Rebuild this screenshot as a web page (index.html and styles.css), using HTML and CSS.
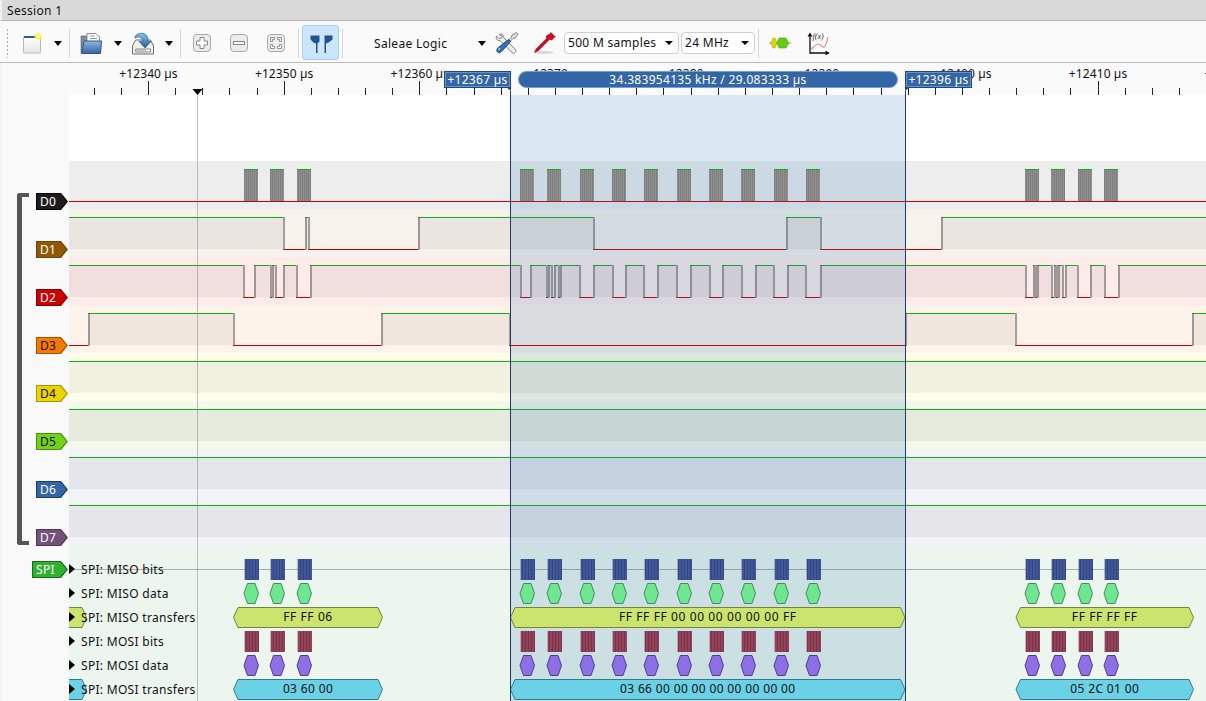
FILE: index.html
```html
<!DOCTYPE html>
<html lang="en">
<head>
    <meta charset="UTF-8">
    <title>Saleae Logic</title>
    <link rel="stylesheet" href="styles.css">
</head>
<body>

    <div class="titlebar">Session 1</div>

    <!-- Toolbar -->
    <div class="toolbar">
        <div class="grip"></div>

        <svg class="icon new-icon" viewBox="0 0 24 24">
            <defs>
                <linearGradient id="pageGrad" x1="0" y1="0" x2="0" y2="1">
                    <stop offset="0" stop-color="#ffffff"/>
                    <stop offset="1" stop-color="#e6e6e6"/>
                </linearGradient>
                <radialGradient id="glowGrad">
                    <stop offset="0" stop-color="#fffbd0"/>
                    <stop offset=".5" stop-color="#fff04a"/>
                    <stop offset="1" stop-color="#fff04a" stop-opacity="0"/>
                </radialGradient>
            </defs>
            <rect x="1.5" y="5.5" width="17" height="16.5" rx="1" fill="url(#pageGrad)" stroke="#b8b8b8"/>
            <rect x="2" y="5" width="14" height="2" fill="#2a5ba5"/>
            <circle cx="16" cy="5.5" r="4.5" fill="url(#glowGrad)"/>
        </svg>
        <span class="arrow arrow-new"></span>
        <span class="sep sep-1"></span>

        <svg class="icon open-icon" viewBox="0 0 24 24">
            <defs>
                <linearGradient id="folderGrad" x1="0" y1="0" x2="0" y2="1">
                    <stop offset="0" stop-color="#8fb6e4"/>
                    <stop offset="1" stop-color="#34649f"/>
                </linearGradient>
            </defs>
            <path d="M2 5h7l1 2h3v15H2z" fill="#7d8a99" stroke="#55606e" stroke-width=".6"/>
            <path d="M8 2.500h9l3.500 3.500V14H8z" fill="#fff" stroke="#8a8a8a"/>
            <path d="M11 5h5M11 7.500h7" stroke="#9a9a9a"/>
            <path d="M5 10h17.500l-1 12.500H2.500z" fill="url(#folderGrad)" stroke="#2f5684"/>
        </svg>
        <span class="arrow arrow-open"></span>

        <svg class="icon save-icon" viewBox="0 0 24 24">
            <defs>
                <linearGradient id="arrowGrad" x1="0" y1="0" x2="0" y2="1">
                    <stop offset="0" stop-color="#8cc0ec"/>
                    <stop offset="1" stop-color="#1f5f9c"/>
                </linearGradient>
            </defs>
            <path d="M1.500 15l3-6h15l3 6v8h-21z" fill="#f1f1f1" stroke="#6d6d6d"/>
            <path d="M4.500 18h15v3h-15z" fill="#fff" stroke="#6d6d6d" stroke-width=".8"/>
            <path d="M4.500 18h11v3h-11z" fill="#bdbdbd"/>
            <path d="M4 5.500c2-3.500 9-4.500 11.500-1 1.500 2 1.500 4 1.500 6h3l-6 6.500-6-6.500h3.500c0-2-.5-4-3-4.500-1.800-.3-3 0-4.500 1z" fill="url(#arrowGrad)" stroke="#265a8c" stroke-width=".7"/>
        </svg>
        <span class="arrow arrow-save"></span>
        <span class="sep sep-2"></span>

        <svg class="zoom-btn zoom-in" viewBox="0 0 18 18">
            <rect x=".5" y=".5" width="17" height="17" rx="3.5" fill="#ececec" stroke="#a8a8a8"/>
            <path d="M7 3.500h4V7h3.500v4H11v3.500H7V11H3.500V7H7z" fill="#fff" stroke="#888"/>
        </svg>
        <svg class="zoom-btn zoom-out" viewBox="0 0 18 18">
            <rect x=".5" y=".5" width="17" height="17" rx="3.5" fill="#ececec" stroke="#a8a8a8"/>
            <rect x="3.500" y="7.500" width="11" height="3" fill="#fff" stroke="#888"/>
        </svg>
        <svg class="zoom-btn zoom-fit" viewBox="0 0 18 18">
            <rect x=".5" y=".5" width="17" height="17" rx="3.5" fill="#ececec" stroke="#a8a8a8"/>
            <path d="M3.500 7.500v-4H7.500v2H5.500v2zM14.500 7.500v-4h-4v2h2v2zM3.500 10.500v4H7.500v-2H5.500v-2zM14.500 10.500v4h-4v-2h2v-2z" fill="#fff" stroke="#888" stroke-width=".9"/>
        </svg>
        <span class="sep sep-3"></span>

        <div class="toggle">
            <svg class="pins" viewBox="308.500 32.500 24 20">
                <path d="M310 35h9v6l-2 2v10h-1.500V43L313 42l-3-3z" fill="#1d5590"/>
                <path d="M332 35h-8v18h1.500V43l2.500-1 4-3z" fill="#1d5590"/>
            </svg>
        </div>
        <span class="sep sep-4"></span>

        <span class="device">Saleae Logic</span>
        <span class="arrow"></span>

        <svg class="icon tools-icon" viewBox="0 0 24 24">
            <path d="M4 3.500c2.500-1.500 5 .5 4.500 3l12 12c1 1 .5 2.500-1 3.500-1 .5-2 .5-2.500-.5l-12-12c-3 .5-4.500-2-3.500-4.500l2.500 2.500 2.500-.5.500-2z" fill="#ececec" stroke="#7f7f7f"/>
            <path d="M21.500 1.500l1.500 1.500-3 4-2 .5-2.500 2.500-1.500-1.500 2.500-2.500.5-2z" fill="#e0e0e0" stroke="#666" stroke-width=".8"/>
            <path d="M13.500 8.500l2 2-8 9c-1.500 2-3.500 3-5 1.500s-.5-3.500 1.500-5z" fill="#2f72b8" stroke="#1a4474"/>
            <path d="M5 17l-1.500 2" stroke="#bcd8f2" stroke-width="1.200"/>
        </svg>
        <svg class="icon probe-icon" viewBox="0 0 24 24">
            <ellipse cx="12" cy="21.500" rx="10" ry="1.500" fill="#d8d8d8"/>
            <path d="M19 1.500l4.500 4.500-1.500.5-2 2.500-2.500-.5L6 20l-3.500 1.500L4 18l10.500-10.500-.5-2.500 3-1.500z" fill="#cc0d1d" stroke="#9c0a16" stroke-width=".5"/>
        </svg>

        <div class="combo combo-samples">500 M samples<span class="arrow arrow-small"></span></div>
        <div class="combo combo-rate">24 MHz<span class="arrow arrow-small"></span></div>
        <span class="sep sep-5"></span>

        <svg class="icon proto-icon" viewBox="0 0 24 24">
            <path d="M1 12h22" stroke="#8a8a8a"/>
            <path d="M5 7h2l2 5-2 5H5l-2-5z" fill="#e0d800" stroke="#a5a500" stroke-width=".6"/>
            <path d="M11 7h7l2.500 5-2.500 5h-7l-2-5z" fill="#66cc11" stroke="#4fa10a" stroke-width=".6"/>
        </svg>
        <svg class="icon fx-icon" viewBox="0 0 24 24">
            <path d="M4 5v17h19" fill="none" stroke="#111" stroke-width="1.300"/>
            <path d="M4 1.500l-2.500 4h5zM23.500 22l-4-2.500v5z" fill="#111"/>
            <path d="M5 18c3-1 4-5 7-5s4 4 6 3 3-5 4-10" fill="none" stroke="#e58a8a" stroke-width="1.200"/>
            <text class="fx-text" x="6.500" y="7.500">f(x)</text>
        </svg>
    </div>

    <div class="main">
        <!-- Channel labels -->
        <div class="gutter">
            <div class="bracket"></div>
            <div class="tags">
                <div class="tag tag-d0"><span>D0</span></div>
                <div class="tag tag-d1"><span>D1</span></div>
                <div class="tag tag-d2"><span>D2</span></div>
                <div class="tag tag-d3"><span>D3</span></div>
                <div class="tag tag-d4"><span>D4</span></div>
                <div class="tag tag-d5"><span>D5</span></div>
                <div class="tag tag-d6"><span>D6</span></div>
                <div class="tag tag-d7"><span>D7</span></div>
                <div class="tag tag-spi"><span>SPI</span></div>
            </div>
        </div>

        <!-- Waveforms, drawn by script.js -->
        <div class="plot">
            <svg id="waves" width="1137" height="638" viewBox="69 63 1137 638">
                <defs>
                    <pattern id="burstGray" width="2" height="10" patternUnits="userSpaceOnUse">
                        <rect width="2" height="10" fill="#8f8f8f"/>
                        <rect width="1" height="10" fill="#7f7f7f"/>
                    </pattern>
                    <pattern id="bitsBlue" width="3" height="10" patternUnits="userSpaceOnUse">
                        <rect width="3" height="10" fill="#3f5699"/>
                        <rect width="1" height="10" fill="#334682"/>
                    </pattern>
                    <pattern id="bitsRed" width="3" height="10" patternUnits="userSpaceOnUse">
                        <rect width="3" height="10" fill="#92425a"/>
                        <rect width="1" height="10" fill="#7b3349"/>
                    </pattern>
                </defs>
            </svg>

            <div class="flag flag-left">+12367 µs</div>
            <div class="measure">34.383954135 kHz / 29.083333 µs</div>
            <div class="flag flag-right">+12396 µs</div>

            <div class="rows">
                <div class="row"><span class="caret"></span>SPI: MISO bits</div>
                <div class="row"><span class="caret"></span>SPI: MISO data</div>
                <div class="row"><span class="caret"></span>SPI: MISO transfers</div>
                <div class="row"><span class="caret"></span>SPI: MOSI bits</div>
                <div class="row"><span class="caret"></span>SPI: MOSI data</div>
                <div class="row"><span class="caret"></span>SPI: MOSI transfers</div>
            </div>
        </div>
    </div>

    <script src="script.js"></script>
</body>
</html>
```

FILE: styles.css
```css
body {
    font-family: "Noto Sans", Tahoma, sans-serif;
    font-size: 12px;
    letter-spacing: .3px;
    margin: 0;
    width: 1206px;
    height: 701px;
    overflow: hidden;
    background-color: #fafafa;
    color: #111;
}

/* title bar */
.titlebar {
    height: 20px;
    line-height: 21px;
    padding-left: 5px;
    background-color: #d9d9d9;
    border-bottom: 1px solid #b4b4b4;
    border-left: 2px solid #f0f0f0;
}

/* toolbar */
.toolbar {
    display: flex;
    align-items: center;
    box-sizing: border-box;
    height: 42px;
    padding: 8px 0 5px 6px;
    background-color: #fafafa;
    border-bottom: 1px solid #bbb;
}
.grip {
    width: 3px;
    height: 30px;
    background-image: radial-gradient(circle, #aaa 1px, transparent 1px);
    background-size: 3px 4px;
}
.icon {
    width: 24px;
    height: 24px;
    flex: none;
}
.arrow {
    flex: none;
    width: 0;
    height: 0;
    border-left: 4.5px solid transparent;
    border-right: 4.5px solid transparent;
    border-top: 5px solid #000;
}
.arrow-small {
    border-left-width: 4px;
    border-right-width: 4px;
    border-top-width: 4px;
}
.sep {
    flex: none;
    width: 1px;
    height: 29px;
    background-color: #d6d6d6;
}
.new-icon { margin-left: 13px; }
.arrow-new { margin-left: 8px; }
.sep-1 { margin-left: 7px; }
.open-icon { margin-left: 9px; }
.arrow-open { margin-left: 11px; }
.save-icon { margin-left: 9px; }
.arrow-save { margin-left: 10px; }
.sep-2 { margin-left: 7px; }
.zoom-btn {
    flex: none;
    width: 18px;
    height: 18px;
}
.zoom-in { margin-left: 12px; }
.zoom-out { margin-left: 19px; }
.zoom-fit { margin-left: 19px; }
.sep-3 { margin-left: 13px; }
.toggle {
    flex: none;
    display: flex;
    align-items: center;
    justify-content: center;
    box-sizing: border-box;
    width: 37px;
    height: 35px;
    margin-left: 3px;
    margin-top: -1px;
    background-color: #cde5fb;
    border: 1px solid #a6d0f6;
    border-radius: 3px;
}
.pins {
    width: 24px;
    height: 20px;
}
.sep-4 { margin-left: 3px; }
.device {
    flex: none;
    width: 104px;
    margin-left: 31px;
}
.tools-icon { margin-left: 9px; }
.probe-icon { margin-left: 13px; }
.combo {
    flex: none;
    display: flex;
    align-items: center;
    justify-content: space-between;
    box-sizing: border-box;
    height: 22px;
    margin-top: -1px;
    padding: 0 5px 0 3px;
    background-color: #fff;
    border: 1px solid #cfcfcf;
    border-radius: 4px;
}
.combo-samples {
    width: 115px;
    margin-left: 8px;
}
.combo-rate {
    width: 74px;
    margin-left: 2px;
}
.sep-5 { margin-left: 3px; }
.proto-icon { margin-left: 9px; }
.fx-icon { margin-left: 14px; }
.fx-text {
    font-family: "Liberation Serif", serif;
    font-style: italic;
    font-size: 8px;
    letter-spacing: 0;
    fill: #222;
}

/* main area */
.main {
    display: flex;
    height: 638px;
}
.gutter {
    flex: none;
    display: flex;
    box-sizing: border-box;
    width: 69px;
    padding-top: 130px;
    background-color: #f9f9f9;
    border-left: 2px solid #f3f3f3;
}
.bracket {
    flex: none;
    box-sizing: border-box;
    width: 12px;
    height: 352px;
    margin-left: 15px;
    border: 4px solid #555;
    border-left-width: 5px;
    border-right: none;
    border-radius: 3px 0 0 3px;
}
.tags {
    flex: 1;
    display: flex;
    flex-direction: column;
    align-items: flex-end;
    gap: 31px;
    padding-right: 1px;
}
.tag {
    position: relative;
    flex: none;
    display: flex;
    align-items: center;
    box-sizing: border-box;
    width: 32px;
    height: 17px;
    padding-left: 4px;
    background-color: var(--edge);
    color: var(--ink);
    clip-path: polygon(0 0, 25px 0, 100% 50%, 25px 100%, 0 100%);
}
.tag::before {
    content: "";
    position: absolute;
    top: 1px;
    right: 1.5px;
    bottom: 1px;
    left: 1px;
    background-color: var(--fill);
    clip-path: polygon(0 0, 23px 0, 100% 50%, 23px 100%, 0 100%);
}
.tag span {
    position: relative;
}
.tag-d0 { --edge: #000; --fill: #1c1c1c; --ink: #fff; }
.tag-d1 { --edge: #6e4502; --fill: #8f5902; --ink: #fff; }
.tag-d2 { --edge: #8a0000; --fill: #cc0000; --ink: #fff; }
.tag-d3 { --edge: #a85200; --fill: #f57900; --ink: #111; }
.tag-d4 { --edge: #a89700; --fill: #edd400; --ink: #111; }
.tag-d5 { --edge: #4e8f0f; --fill: #73d216; --ink: #111; }
.tag-d6 { --edge: #1f3f6b; --fill: #3465a4; --ink: #fff; }
.tag-d7 { --edge: #523756; --fill: #75507b; --ink: #fff; }
.tag-spi {
    --edge: #167016;
    --fill: #2fb32f;
    --ink: #fff;
    width: 36px;
    margin-top: -16px;
    clip-path: polygon(0 0, 29px 0, 100% 50%, 29px 100%, 0 100%);
}
.tag-spi::before {
    clip-path: polygon(0 0, 27px 0, 100% 50%, 27px 100%, 0 100%);
}

.plot {
    position: relative;
    flex: 1;
    overflow: hidden;
}
#waves {
    display: block;
}
#waves text {
    font-family: "Noto Sans", Tahoma, sans-serif;
    font-size: 12px;
    fill: #111;
}
#waves text.ruler-text {
    letter-spacing: .1px;
}
#waves text.miso-text {
    letter-spacing: .6px;
}
#waves text.mosi-text {
    letter-spacing: .35px;
}

/* cursors and measurement over the ruler */
.flag, .measure {
    position: absolute;
    top: 8px;
    box-sizing: border-box;
    height: 17px;
    line-height: 15px;
    text-align: center;
    color: #fff;
    background-color: #3465a4;
    border: 1px solid #6f9fe0;
}
.flag {
    width: 67px;
    outline: 1px solid #24467a;
    outline-offset: -1px;
    box-shadow: inset 0 0 0 1px #5f93dc;
}
.flag::after {
    content: "";
    position: absolute;
    top: 15px;
    width: 5px;
    height: 4px;
    background-color: #24467a;
}
.flag-left { left: 375px; }
.flag-left::after {
    right: -1px;
    clip-path: polygon(0 0, 100% 0, 100% 100%);
}
.flag-right { left: 836px; }
.flag-right::after {
    left: -1px;
    clip-path: polygon(0 0, 100% 0, 0 100%);
}
.measure {
    left: 449px;
    width: 380px;
    border-radius: 9px;
}

/* protocol rows */
.rows {
    position: absolute;
    top: 494px;
    left: 0;
}
.row {
    display: flex;
    align-items: center;
    height: 24px;
}
.caret {
    flex: none;
    width: 0;
    height: 0;
    margin-right: 6px;
    border-top: 5.5px solid transparent;
    border-bottom: 5.5px solid transparent;
    border-left: 6px solid #000;
}
```

FILE: script.js
```js
// Draws the ruler, the channels and the protocol rows into #waves
const svg = document.getElementById('waves');
const NS = 'http://www.w3.org/2000/svg';

function add(tag, attrs, text) {
    const el = document.createElementNS(NS, tag);
    for (const k in attrs) el.setAttribute(k, attrs[k]);
    if (text) el.textContent = text;
    svg.appendChild(el);
    return el;
}
function rect(x, y, w, h, fill) {
    return add('rect', { x: x, y: y, width: w, height: h, fill: fill, 'shape-rendering': 'crispEdges' });
}

const LEFT = 69, RIGHT = 1206;
const GREEN = '#0fb30f', RED = '#c80000';

// start of each 14px burst of clock edges
const bursts = [244, 270, 297, 520, 547, 580, 612, 644, 677, 709, 741, 774, 806, 1025, 1051, 1078, 1104];

const channels = [
    { bg: '#ededed', high: false, edges: [] },
    { bg: '#f7f2ec', high: true, edges: [283, 305, 308, 418, 593, 786, 820, 941] },
    { bg: '#fdebea', high: true, edges: [243, 254, 270, 272, 275, 283, 296, 310, 520, 530, 546, 548, 551, 554, 558, 560, 579, 593, 612, 625, 643, 657, 676, 690, 709, 722, 741, 755, 773, 787, 805, 820, 1025, 1033, 1035, 1037, 1051, 1054, 1056, 1058, 1062, 1065, 1077, 1090, 1104, 1118] },
    { bg: '#fef3ea', high: false, edges: [88, 233, 381, 509, 905, 1015, 1192] },
    { bg: '#fffeeb', high: true, edges: [] },
    { bg: '#f3f8ea', high: true, edges: [] },
    { bg: '#f1f3f8', high: true, edges: [] },
    { bg: '#f3f2f6', high: true, edges: [] }
];

// ruler
rect(LEFT, 63, RIGHT - LEFT, 32, '#fafafa');
rect(LEFT, 95, RIGHT - LEFT, 66, '#ffffff');
const TICK = 27.13;
for (let i = -2; i < 42; i++) {
    const x = Math.round(148 + i * TICK);
    if (i % 5 === 0) rect(x, 81, 1, 14, '#222');
    else rect(x, 88, 1, 7, '#222');
}
for (let i = 0; i < 9; i++) {
    add('text', { class: 'ruler-text', x: 148.5 + i * TICK * 5, y: 78, 'text-anchor': 'middle' }, '+' + (12340 + i * 10) + ' µs');
}
add('path', { d: 'M192.500 89h10l-5 6z', fill: '#000' });

// digital channels
channels.forEach(function (ch, n) {
    const top = 161 + n * 48;
    rect(LEFT, top, RIGHT - LEFT, 48, ch.bg);
    const xs = [LEFT].concat(ch.edges, [RIGHT]);
    for (let i = 0; i < xs.length - 1; i++) {
        const high = ch.high === (i % 2 === 0);
        const w = xs[i + 1] - xs[i];
        if (high) {
            rect(xs[i], top + 8, w, 32, 'rgba(0,0,0,.05)');
            rect(xs[i], top + 8, w, 1, GREEN);
        } else {
            rect(xs[i], top + 40, w, 1, RED);
        }
    }
    ch.edges.forEach(function (x) {
        rect(x, top + 8, 2, 33, 'rgba(90,90,90,.55)');
    });
});

// protocol area
rect(LEFT, 545, RIGHT - LEFT, 156, '#edf6ee');
rect(LEFT, 569, RIGHT - LEFT, 1, '#aaaaaa');

// hover cursor and selection, bursts and annotations stay on top of them
rect(197, 95, 1, 606, 'rgba(120,120,120,.45)');
rect(510, 95, 396, 606, 'rgba(40,110,170,.17)');

// D0 clock bursts
bursts.forEach(function (x) {
    rect(x, 169, 14, 32, 'url(#burstGray)');
    rect(x, 169, 14, 1, GREEN);
});

function hex(x0, x1, y, inset, fill, stroke) {
    const t = y + 0.5, b = y + 20.5, m = y + 10.5;
    add('polygon', {
        points: [x0, m, x0 + inset, t, x1 - inset, t, x1, m, x1 - inset, b, x0 + inset, b].join(' '),
        fill: fill, stroke: stroke
    });
}
function label(x, y, text, cls) {
    add('text', { class: cls, x: x, y: y + 14, 'text-anchor': 'middle' }, text);
}

bursts.forEach(function (x) {
    rect(x, 559, 15, 21, 'rgba(60,80,140,.35)');
    rect(x + 0.5, 559, 14, 21, 'url(#bitsBlue)');
    hex(x, x + 14.5, 583, 3.5, '#6fe690', '#3c8f63');
    rect(x, 631, 15, 21, 'rgba(140,60,80,.35)');
    rect(x + 0.5, 631, 14, 21, 'url(#bitsRed)');
    hex(x, x + 14.5, 655, 3.5, '#8f6fe6', '#4f3c90');
});

const spans = [[40, 86.5], [233.5, 382.5], [510.5, 905], [1016, 1193.5]];
const miso = ['', 'FF FF 06', 'FF FF FF 00 00 00 00 00 00 FF', 'FF FF FF FF'];
const mosi = ['', '03 60 00', '03 66 00 00 00 00 00 00 00 00', '05 2C 01 00'];
spans.forEach(function (s, i) {
    const mid = (s[0] + s[1]) / 2;
    hex(s[0], s[1], 607, 4.5, '#cbe46d', '#74843a');
    hex(s[0], s[1], 679, 4.5, '#6ad1e6', '#2f7c8f');
    if (miso[i]) label(mid, 607, miso[i], 'miso-text');
    if (mosi[i]) label(mid, 679, mosi[i], 'mosi-text');
});

// selection edges
rect(510, 91, 1, 610, '#1c3a6c');
rect(905, 91, 1, 610, '#1c3a6c');
```
